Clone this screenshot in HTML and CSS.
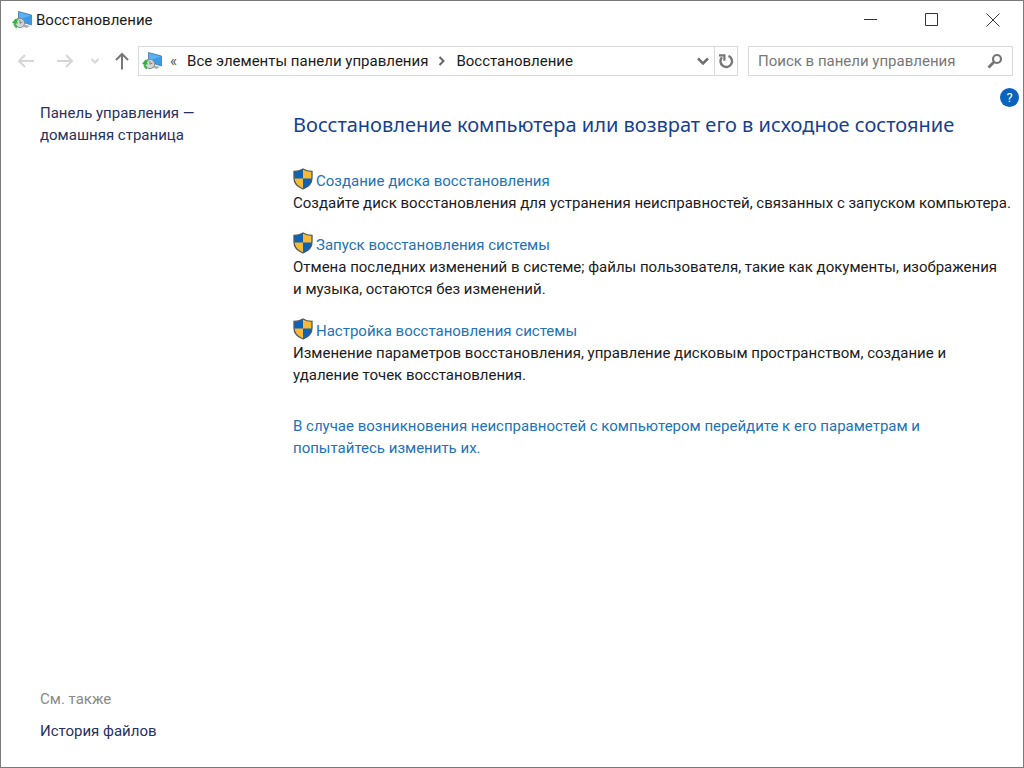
FILE: index.html
```html
<!DOCTYPE html>
<html lang="ru">
<head>
<meta charset="utf-8">
<title>Восстановление</title>
<link rel="stylesheet" href="styles.css">
</head>
<body>
<svg class="defs" aria-hidden="true">
  <symbol id="recovery" viewBox="0 0 20 18">
    <path d="M6.500 .5 19.500 4V14L6.500 10Z" fill="#3b9bea" stroke="#3a6f9c" stroke-width=".7"/>
    <path d="M7 1.300 19 4.500 7 8.500Z" fill="#5bb1f2"/>
    <path d="M12.500 13.500 18 15 14.500 17 10.500 15.500Z" fill="#a9b0b5"/>
    <circle cx="8" cy="12" r="4.600" fill="#d2d7d8" stroke="#858c90" stroke-width="1"/>
    <path d="M8 9V12.300L10.500 11" fill="none" stroke="#777f84"/>
    <path d="M5 16.500C1.500 14.500 2 10 6 8" fill="none" stroke="#4fb45a" stroke-width="2.200"/>
    <path d="M0 12 3.500 7.500 6 12.500Z" fill="#35b044"/>
  </symbol>
  <symbol id="shield" viewBox="0 0 20 22">
    <path d="M10 1C7.500 2.600 4.500 3.300 1 3.300V10C1 15.500 4.500 18.800 10 21 15.500 18.800 19 15.500 19 10V3.300C15.500 3.300 12.500 2.600 10 1Z" fill="#f9b934"/>
    <path d="M10 1C7.500 2.600 4.500 3.300 1 3.300V10.500H10Z" fill="#0d63b8"/>
    <path d="M10 10.500H19C18.800 15.700 15.300 18.900 10 21Z" fill="#0d63b8"/>
    <path d="M10 1C7.500 2.600 4.500 3.300 1 3.300V10C1 15.500 4.500 18.800 10 21 15.500 18.800 19 15.500 19 10V3.300C15.500 3.300 12.500 2.600 10 1Z" fill="none" stroke="#4d5a62" stroke-width="1.300"/>
  </symbol>
</svg>
<div class="window">
  <header class="titlebar">
    <svg class="app-icon"><use href="#recovery"/></svg>
    <span class="window-title">Восстановление</span>
    <div class="window-buttons">
      <button class="win-btn" type="button" aria-label="Свернуть"><svg viewBox="0 0 14 14"><path d="M0 6.500H13"/></svg></button>
      <button class="win-btn" type="button" aria-label="Развернуть"><svg viewBox="0 0 14 14"><path d="M.5.500H12.500V12.500H.5Z"/></svg></button>
      <button class="win-btn" type="button" aria-label="Закрыть"><svg viewBox="0 0 14 14"><path d="M.5.500 13.500 13.500M13.500.500.5 13.500"/></svg></button>
    </div>
  </header>

  <nav class="toolbar">
    <button class="nav-btn nav-side" type="button" aria-label="Назад" disabled><svg viewBox="0 0 18 18"><path d="M17 9H2M8 3 2 9 8 15"/></svg></button>
    <button class="nav-btn nav-side" type="button" aria-label="Вперёд" disabled><svg viewBox="0 0 18 18"><path d="M1 9H16M10 3 16 9 10 15"/></svg></button>
    <button class="nav-btn nav-recent" type="button" aria-label="Последние" disabled><svg viewBox="0 0 18 18"><path d="M5.500 7 9 10.500 12.500 7"/></svg></button>
    <button class="nav-btn nav-up" type="button" aria-label="Вверх"><svg viewBox="0 0 18 18"><path d="M9 17.500V2M3 8 9 2 15 8"/></svg></button>
    <div class="address">
      <svg class="app-icon"><use href="#recovery"/></svg>
      <span class="chevrons">«</span>
      <a class="crumb" href="#">Все элементы панели управления</a>
      <svg class="crumb-arrow" viewBox="0 0 8 12"><path d="M1.500 2 5.500 6 1.500 10"/></svg>
      <a class="crumb" href="#">Восстановление</a>
      <button class="history" type="button" aria-label="Журнал"><svg viewBox="0 0 14 10"><path d="M2 2.500 7 7.500 12 2.500"/></svg></button>
      <button class="refresh" type="button" aria-label="Обновить"><svg viewBox="0 0 16 16"><path d="M10.500 2.800A5.800 5.800 0 1 1 4 4.200" fill="none" stroke="#777" stroke-width="2.400"/><path d="M1 1.200H7.500V7.700H5.300V3.400H1Z" fill="#777"/></svg></button>
    </div>
    <div class="search">
      <input class="search-input" type="text" placeholder="Поиск в панели управления" aria-label="Поиск в панели управления">
      <svg class="search-icon" viewBox="0 0 16 16"><circle cx="10" cy="6" r="4" fill="none" stroke="#757575" stroke-width="2.200"/><path d="M7 9 1.500 14.500" stroke="#757575" stroke-width="2.800"/></svg>
    </div>
  </nav>

  <div class="body">
    <aside class="sidebar">
      <a class="side-link" href="#">Панель управления —<br>домашняя страница</a>
      <div class="see-also">
        <span class="see-title">См. также</span>
        <a class="side-link" href="#">История файлов</a>
      </div>
    </aside>
    <main class="content">
      <h1 class="heading">Восстановление компьютера или возврат его в исходное состояние</h1>
      <section class="task">
        <a class="task-link" href="#"><svg class="shield"><use href="#shield"/></svg>Создание диска восстановления</a>
        <p class="task-text">Создайте диск восстановления для устранения неисправностей, связанных с запуском компьютера.</p>
      </section>
      <section class="task">
        <a class="task-link" href="#"><svg class="shield"><use href="#shield"/></svg>Запуск восстановления системы</a>
        <p class="task-text">Отмена последних изменений в системе; файлы пользователя, такие как документы, изображения<br>и музыка, остаются без изменений.</p>
      </section>
      <section class="task">
        <a class="task-link" href="#"><svg class="shield"><use href="#shield"/></svg>Настройка восстановления системы</a>
        <p class="task-text">Изменение параметров восстановления, управление дисковым пространством, создание и<br>удаление точек восстановления.</p>
      </section>
      <a class="settings-link" href="#">В случае возникновения неисправностей с компьютером перейдите к его параметрам и<br>попытайтесь изменить их.</a>
    </main>
    <button class="help" type="button" aria-label="Справка">?</button>
  </div>
</div>
</body>
</html>
```
FILE: styles.css
```css
* { box-sizing: border-box; }
body {
  margin: 0;
  font: 15px/22px Roboto, "Noto Sans", sans-serif;
  color: #1b1b1b;
  background: #fff;
}
a { text-decoration: none; }
button {
  padding: 0;
  border: 0;
  background: none;
  font: inherit;
}
.defs { position: absolute; width: 0; height: 0; }
.window {
  min-height: 100vh;
  display: flex;
  flex-direction: column;
  border: 1px solid #7a7a7a;
}
.titlebar {
  display: flex;
  align-items: center;
  height: 38px;
  padding-left: 11px;
}
.app-icon { width: 20px; height: 18px; flex: none; }
.window-title { margin-left: 4px; }
.window-buttons { display: flex; margin-left: auto; }
.win-btn {
  width: 61px;
  display: flex;
  justify-content: center;
}
.win-btn svg { width: 14px; height: 14px; fill: none; stroke: #333; }
.toolbar {
  display: flex;
  align-items: center;
  height: 44px;
  padding: 0 10px 0 16px;
}
.nav-btn { display: flex; justify-content: center; }
.nav-btn svg { width: 18px; height: 18px; fill: none; stroke: #777; stroke-width: 2; }
.nav-btn:disabled svg { stroke: #d6d6d6; }
.nav-side { width: 18px; margin-right: 21px; }
.nav-recent { width: 18px; margin-left: -9px; }
.nav-up { width: 18px; margin: 0 7px 0 9px; }
.address {
  flex: 1;
  display: flex;
  align-items: center;
  height: 30px;
  padding-left: 3px;
  border: 1px solid #d9d9d9;
  white-space: nowrap;
}
.chevrons { margin: 0 10px 0 8px; color: #555; }
.crumb { color: #1b1b1b; }
.crumb-arrow { width: 8px; height: 12px; margin: 0 10px; fill: none; stroke: #666; stroke-width: 2; }
.history { margin-left: auto; width: 22px; display: flex; justify-content: center; }
.history svg { width: 14px; height: 10px; fill: none; stroke: #707070; stroke-width: 2.5; }
.refresh {
  display: flex;
  align-items: center;
  justify-content: center;
  width: 23px;
  height: 100%;
  border-left: 1px solid #d9d9d9;
}
.refresh svg { width: 16px; height: 16px; }
.search {
  width: 265px;
  flex: none;
  display: flex;
  align-items: center;
  height: 30px;
  margin-left: 10px;
  padding: 0 9px;
  border: 1px solid #d9d9d9;
}
.search-input {
  flex: 1;
  min-width: 0;
  padding: 0;
  border: 0;
  outline: 0;
  font: inherit;
  background: none;
}
.search-input::placeholder { color: #777; opacity: 1; }
.search-icon { width: 16px; height: 16px; }
.body { position: relative; flex: 1; display: flex; }
.sidebar {
  width: 253px;
  flex: none;
  display: flex;
  flex-direction: column;
  padding: 19px 0 25px 39px;
}
.side-link { color: #27315f; }
.see-also { margin-top: auto; display: flex; flex-direction: column; gap: 10px; }
.see-title { color: #8a8a8a; }
.content {
  flex: 1;
  min-width: 0;
  padding: 28px 0 0 39px;
}
.heading {
  margin: 0 0 31px;
  font-family: "Noto Sans", "Open Sans", sans-serif;
  font-size: 20px;
  line-height: 28px;
  font-weight: 400;
  color: #173f8f;
}
.task { margin-bottom: 20px; }
.task-link { display: flex; align-items: center; height: 22px; color: #2272b9; }
.shield { width: 20px; height: 22px; margin: 0 3px 4px 0; flex: none; }
.task-text { margin: 0; }
.settings-link { display: block; margin-top: 29px; color: #2272b9; }
.help {
  position: absolute;
  top: 5px;
  right: 4px;
  width: 19px;
  height: 19px;
  border-radius: 50%;
  background: #0a63bd;
  color: #fff;
  font-size: 13px;
  line-height: 19px;
}
```
